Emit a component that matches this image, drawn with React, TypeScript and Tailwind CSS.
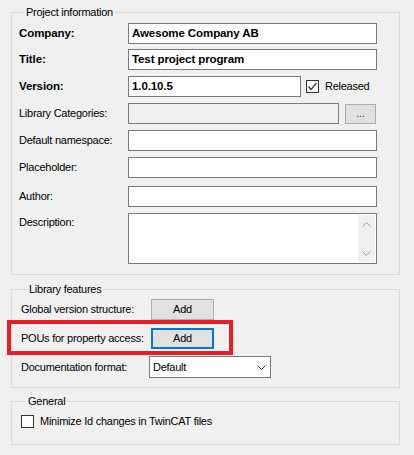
import React from 'react';

const font = { fontFamily: '"Liberation Sans", Arial, sans-serif' };

// small check mark used in the Released box
function Check() {
  return (
    <svg width="11" height="11" viewBox="0 0 11 11" className="block">
      <polyline points="1.5,5.5 4,8.5 9.5,2" fill="none" stroke="#333" strokeWidth="1.2" />
    </svg>
  );
}

function Chevron({ up = false, color = '#333' }: { up?: boolean; color?: string }) {
  return (
    <svg width="9" height="5" viewBox="0 0 9 5" className="block">
      <polyline
        points={up ? '0.5,4.5 4.5,0.5 8.5,4.5' : '0.5,0.5 4.5,4.5 8.5,0.5'}
        fill="none"
        stroke={color}
        strokeWidth="1"
      />
    </svg>
  );
}

function TextBox({ value, width = 'w-[249px]', bold = true }: { value?: string; width?: string; bold?: boolean }) {
  return (
    <div className={`${width} h-[21px] bg-white border border-[#7a7a7a] pl-[3px] flex items-center`}>
      <span className={bold ? 'font-bold text-[11.5px] tracking-[-0.1px]' : ''}>{value}</span>
    </div>
  );
}

function Row({ label, bold = false, className = '', children }: { label: string; bold?: boolean; className?: string; children?: React.ReactNode }) {
  return (
    <div className={`flex items-center h-[21px] ${className}`}>
      <div className={`w-[109px] ${bold ? 'font-bold text-[11.5px] tracking-[-0.1px]' : ''}`}>{label}</div>
      {children}
    </div>
  );
}

function AddButton({ focused = false }: { focused?: boolean }) {
  return (
    <div
      className={`w-[63px] h-[21px] bg-[#e1e1e1] flex items-center justify-center ${
        focused ? 'border-2 border-[#0078d7]' : 'border border-[#adadad]'
      }`}
    >
      Add
    </div>
  );
}

export default function App() {
  return (
    <div
      className="w-[414px] h-[455px] bg-[#f0f0f0] text-black text-[11px] leading-[13px] tracking-[-0.25px] overflow-hidden"
      style={font}
    >
      {/* Project information */}
      <fieldset className="ml-[11px] mt-[6px] w-[389px] border border-[#dcdcdc] pl-[7px] pb-[10px]">
        <legend className="ml-[5px] px-[2px]">Project information</legend>
        <Row label="Company:" bold className="mt-[4px]">
          <TextBox value="Awesome Company AB" />
        </Row>
        <Row label="Title:" bold className="mt-[5px]">
          <TextBox value="Test project program" />
        </Row>
        <Row label="Version:" bold className="mt-[6px]">
          <TextBox value="1.0.10.5" width="w-[173px]" />
          <div className="ml-[5px] w-[13px] h-[13px] bg-white border border-[#333] flex items-center justify-center">
            <Check />
          </div>
          <span className="ml-[6px]">Released</span>
        </Row>
        <Row label="Library Categories:" className="mt-[6px]">
          <div className="w-[211px] h-[21px] bg-[#f0f0f0] border border-[#7a7a7a]" />
          <div className="ml-[6px] w-[31px] h-[20px] bg-[#e1e1e1] border border-[#adadad] flex items-end justify-center pb-[3px] text-[#333]">
            ...
          </div>
        </Row>
        <Row label="Default namespace:" className="mt-[6px]">
          <TextBox />
        </Row>
        <Row label="Placeholder:" className="mt-[6px]">
          <TextBox />
        </Row>
        <Row label="Author:" className="mt-[8px]">
          <TextBox />
        </Row>
        <div className="flex items-start mt-[6px]">
          <div className="w-[109px] pt-[3px]">Description:</div>
          <div className="w-[249px] h-[51px] bg-white border border-[#7a7a7a] flex justify-end pr-[1px] py-[1px]">
            <div className="w-[17px] bg-[#f0f0f0] flex flex-col items-center justify-between pt-[7px] pb-[6px]">
              <Chevron up color="#a3a3a3" />
              <Chevron color="#a3a3a3" />
            </div>
          </div>
        </div>
      </fieldset>

      {/* Library features */}
      <fieldset className="ml-[11px] mt-[8px] w-[389px] border border-[#dcdcdc] pl-[9px] pb-[9px]">
        <legend className="ml-[6px] px-[2px]">Library features</legend>
        <div className="flex items-center h-[21px] mt-[3px]">
          <div className="w-[130px]">Global version structure:</div>
          <AddButton />
        </div>
        <div className="relative flex items-center h-[21px] mt-[8px]">
          <div className="w-[130px]">POUs for property access:</div>
          <AddButton focused />
          <div className="absolute left-[-14px] top-[-8px] w-[226px] h-[35px] border-4 border-[#ec1c24] pointer-events-none" />
        </div>
        <div className="flex items-center h-[22px] mt-[7px]">
          <div className="w-[128px]">Documentation format:</div>
          <div className="w-[122px] h-[22px] bg-white border border-[#7a7a7a] pl-[3px] pr-[4px] flex items-center justify-between">
            <span>Default</span>
            <Chevron />
          </div>
        </div>
      </fieldset>

      {/* General */}
      <fieldset className="ml-[11px] mt-[7px] w-[389px] border border-[#dcdcdc] pl-[9px] pb-[15px]">
        <legend className="ml-[5px] px-[2px]">General</legend>
        <div className="flex items-center h-[15px] mt-[6px]">
          <div className="w-[13px] h-[13px] bg-white border border-[#333]" />
          <span className="ml-[6px]">Minimize Id changes in TwinCAT files</span>
        </div>
      </fieldset>
    </div>
  );
}
